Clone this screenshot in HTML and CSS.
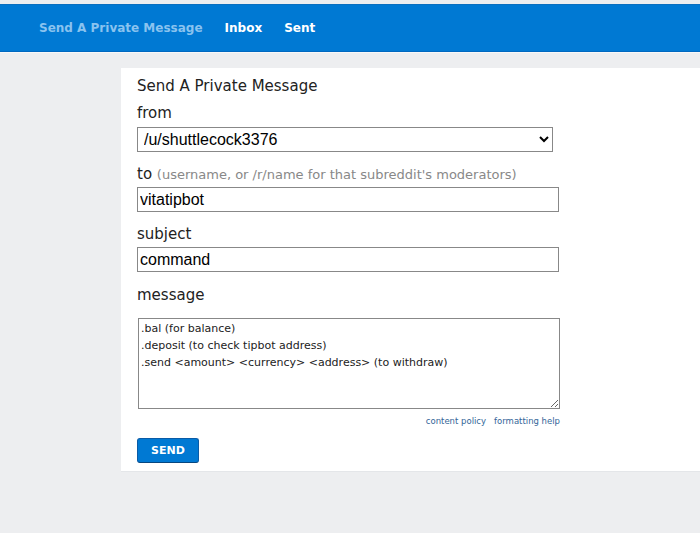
FILE: index.html
```html
<!DOCTYPE html>
<html lang="en">
<head>
    <meta charset="UTF-8">
    <meta name="viewport" content="width=device-width, initial-scale=1.0">
    <title>Send A Private Message</title>
    <link rel="stylesheet" href="styles.css">
</head>
<body>
    <header class="topbar">
        <nav class="tabs">
            <a class="tab selected" href="#">Send A Private Message</a>
            <a class="tab" href="#">Inbox</a>
            <a class="tab" href="#">Sent</a>
        </nav>
    </header>
    <div class="content">
        <form class="compose">
            <h1 class="title">Send A Private Message</h1>

            <label class="label label-first" for="from">from</label>
            <select id="from" class="from">
                <option>/u/shuttlecock3376</option>
            </select>

            <label class="label label-to" for="to">to <span class="hint">(username, or /r/name for that subreddit's moderators)</span></label>
            <input type="text" id="to" class="field" value="vitatipbot">

            <label class="label" for="subject">subject</label>
            <input type="text" id="subject" class="field" value="command">

            <label class="label label-message" for="message">message</label>
            <div class="editor">
                <textarea id="message" class="message">.bal (for balance)
.deposit (to check tipbot address)
.send &lt;amount&gt; &lt;currency&gt; &lt;address&gt; (to withdraw)</textarea>
                <div class="help">
                    <a href="#">content policy</a>
                    <a href="#">formatting help</a>
                </div>
            </div>

            <button type="button" class="send">SEND</button>
        </form>
    </div>
</body>
</html>
```

FILE: styles.css
```css
body {
    margin: 0;
    padding: 0;
    font-family: "DejaVu Sans", Verdana, sans-serif;
    background-color: #edeef0;
    color: #222;
}
.topbar {
    margin-top: 4px;
    height: 46px;
    background-color: #0079d3;
    border-top: 1px solid #0a6fc0;
    border-bottom: 1px solid #0068c0;
    box-shadow: 0 1px 0 #f8f8f8;
}
.tabs {
    display: flex;
    align-items: center;
    height: 100%;
    padding-left: 39px;
    gap: 22px;
}
.tab {
    color: #fff;
    font-weight: bold;
    font-size: 12px;
    text-decoration: none;
}
.tab.selected {
    color: #8ac3ef;
}
.content {
    padding-top: 16px;
    padding-left: 121px;
}
.compose {
    background-color: #fff;
    padding: 8px 16px 8px 16px;
    display: flex;
    flex-direction: column;
    align-items: flex-start;
    border-bottom: 1px solid #e4e6e9;
}
.title {
    margin: 0;
    font-size: 15px;
    font-weight: normal;
    line-height: 20px;
}
.label {
    font-size: 15px;
    line-height: 20px;
    margin-top: 12px;
    margin-bottom: 3px;
}
.label-first {
    margin-top: 7px;
    margin-bottom: 4px;
}
.label-to {
    margin-top: 12px;
    margin-bottom: 2px;
}
.hint {
    font-size: 13px;
    color: #888;
}
.from,
.field {
    font-family: "Liberation Sans", Arial, sans-serif;
    font-size: 16px;
    color: #000;
    border: 1px solid #888;
    box-sizing: border-box;
    height: 25px;
}
.from {
    width: 416px;
    padding: 0 2px;
    background-color: #fff;
    border-radius: 0;
}
.field {
    width: 422px;
    padding: 1px 2px;
}
.label-message {
    margin-top: 13px;
    margin-bottom: 13px;
}
.editor {
    width: 422px;
    display: flex;
    flex-direction: column;
    margin-left: 1px;
}
.message {
    font-family: "DejaVu Sans", Verdana, sans-serif;
    font-size: 11px;
    line-height: 17px;
    color: #222;
    width: 422px;
    height: 91px;
    box-sizing: border-box;
    border: 1px solid #888;
    padding: 1px 2px;
    resize: both;
}
.help {
    display: flex;
    justify-content: flex-end;
    gap: 8px;
    margin-top: 6px;
    font-size: 8.5px;
    line-height: 12px;
}
.help a {
    color: #369;
    text-decoration: none;
}
.send {
    margin-top: 11px;
    width: 62px;
    height: 25px;
    background-color: #0079d3;
    color: #fff;
    font-family: "DejaVu Sans", Verdana, sans-serif;
    font-weight: bold;
    font-size: 11px;
    border: 1px solid #0a5ba6;
    border-bottom-color: #07467f;
    border-radius: 3px;
    cursor: pointer;
}
```
